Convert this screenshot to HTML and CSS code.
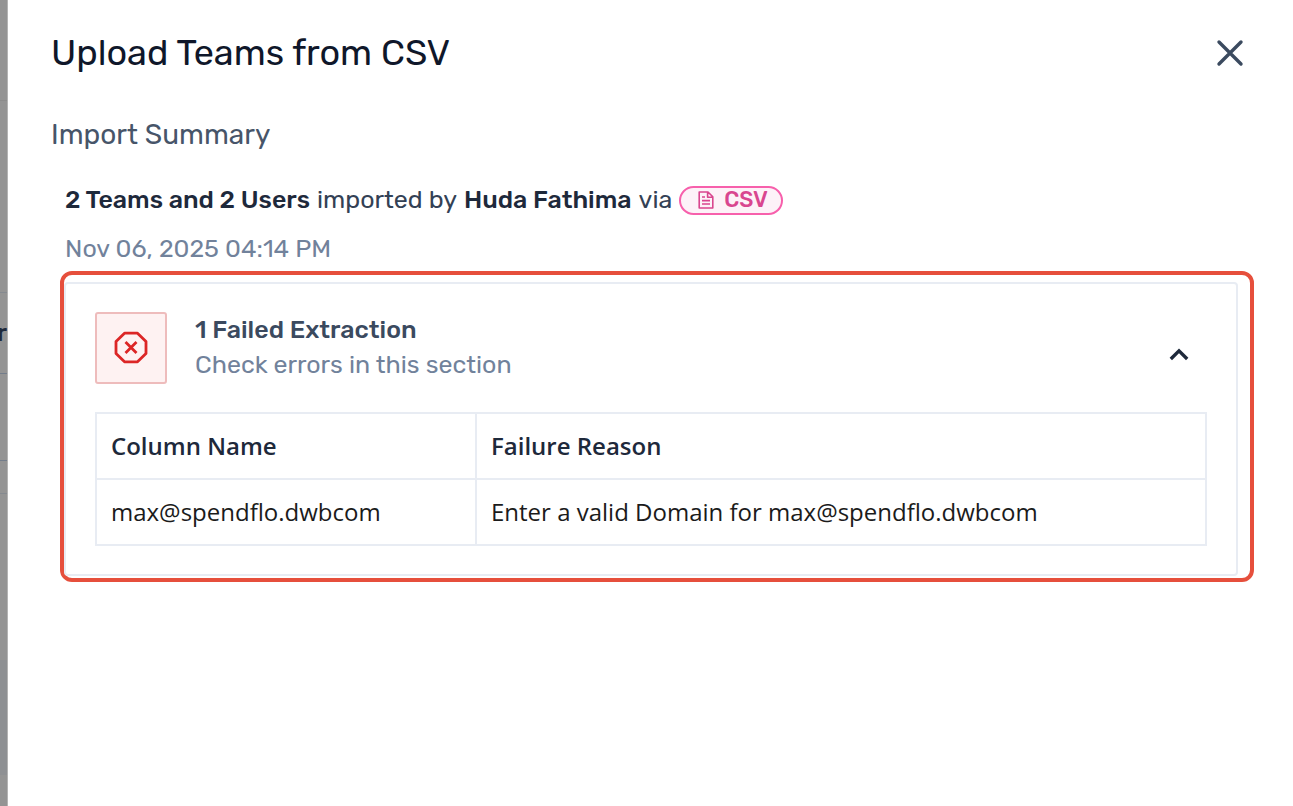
FILE: index.html
```html
<!DOCTYPE html>
<html lang="en">
<head>
    <meta charset="UTF-8">
    <meta name="viewport" content="width=device-width, initial-scale=1.0">
    <title>Upload Teams from CSV</title>
    <link rel="stylesheet" href="styles.css">
</head>
<body>
    <!-- Page behind the drawer -->
    <div class="backdrop">
        <div class="strip strip-top"></div>
        <div class="strip strip-nav"></div>
        <div class="strip strip-head">r</div>
        <div class="strip strip-row"></div>
        <div class="strip strip-gap"></div>
        <div class="strip strip-body"></div>
        <div class="strip strip-band"></div>
    </div>

    <main class="drawer">
        <header class="drawer-header">
            <h1>Upload Teams from CSV</h1>
            <button type="button" class="icon-button" aria-label="Close">
                <svg width="30" height="30" viewBox="0 0 30 30" fill="none" stroke="#3b4a5f" stroke-width="3.4" stroke-linecap="round">
                    <path d="M4 4L26 26M26 4L4 26"/>
                </svg>
            </button>
        </header>

        <h2>Import Summary</h2>

        <section class="summary">
            <p class="summary-line">
                <strong>2 Teams and 2 Users</strong>
                <span>imported by</span>
                <strong>Huda Fathima</strong>
                <span>via</span>
                <span class="badge">
                    <svg width="16" height="18" viewBox="0 0 16 18" fill="none" stroke="#d9468f" stroke-width="1.6" stroke-linejoin="round">
                        <path d="M1.2 1H10L14.8 5.8V17H1.2ZM9.6 1V6.2H14.8M4 6H7M4 9.6H12M4 13H12"/>
                    </svg>
                    CSV
                </span>
            </p>
            <p class="date">Nov 06, 2025 04:14 PM</p>
        </section>

        <div class="highlight">
            <section class="card">
                <div class="card-header">
                    <div class="error-icon">
                        <svg width="36" height="34" viewBox="0 0 36 34" fill="none" stroke="#dc2626" stroke-width="2.8" stroke-linejoin="round">
                            <path d="M11.5 2.2H24.5L33 10.5V22.5L24.5 30.8H11.5L3 22.5V10.5ZM12.5 11L23.5 22M23.5 11L12.5 22"/>
                        </svg>
                    </div>
                    <div class="card-title">
                        <h3>1 Failed Extraction</h3>
                        <p>Check errors in this section</p>
                    </div>
                    <button type="button" class="icon-button toggle" aria-label="Collapse">
                        <svg width="20" height="14" viewBox="0 0 20 14" fill="none" stroke="#1e293b" stroke-width="3.4">
                            <path d="M1.8 12L10 3.8L18.2 12"/>
                        </svg>
                    </button>
                </div>
                <table>
                    <thead>
                        <tr>
                            <th class="col-name">Column Name</th>
                            <th>Failure Reason</th>
                        </tr>
                    </thead>
                    <tbody>
                        <tr>
                            <td>max@spendflo.dwbcom</td>
                            <td>Enter a valid Domain for max@spendflo.dwbcom</td>
                        </tr>
                    </tbody>
                </table>
            </section>
        </div>
    </main>
</body>
</html>
```
FILE: styles.css
```css
* {
    box-sizing: border-box;
}
body {
    display: flex;
    min-height: 100vh;
    margin: 0;
    font-family: Rubik, Roboto, sans-serif;
    color: #1e293b;
    background-color: white;
}
h1, h2, h3, p {
    margin: 0;
    font-weight: 400;
}

/* Dimmed page */
.backdrop {
    display: flex;
    flex-direction: column;
    flex: none;
    width: 8px;
    overflow: hidden;
    background-color: #949494;
    border-right: 1px solid #b4b4b4;
}
.strip {
    flex: none;
    border-bottom: 1px solid #858a90;
}
.strip-top {
    height: 101px;
    border-color: #8c8c8c;
}
.strip-nav {
    height: 192px;
}
.strip-head {
    height: 81px;
    font-size: 24px;
    font-weight: 500;
    line-height: 80px;
    text-indent: -3px;
    border-color: #737d8b;
}
.strip-row {
    height: 87px;
    border-color: #737d8b;
}
.strip-gap {
    height: 33px;
}
.strip-body {
    height: 166px;
    border: none;
}
.strip-band {
    height: 115px;
    background-color: #8e9093;
    border: none;
}

/* Drawer */
.drawer {
    flex: 1;
    padding: 28px 39px 28px 43px;
}
.drawer-header {
    display: flex;
    justify-content: space-between;
    align-items: center;
    padding-right: 9px;
}
h1 {
    font-size: 36px;
    line-height: 50px;
    color: #0f172a;
}
h2 {
    margin-top: 37px;
    font-size: 28px;
    line-height: 40px;
    color: #475569;
}
.icon-button {
    display: flex;
    padding: 0;
    background: none;
    border: none;
    cursor: pointer;
}

.summary {
    padding: 27px 14px 4px;
    font-size: 25px;
}
.summary-line {
    display: flex;
    align-items: center;
    gap: 7px;
    line-height: 36px;
    color: #334155;
}
.summary-line strong {
    font-weight: 500;
    color: #1e293b;
}
.badge {
    display: flex;
    align-items: center;
    gap: 10px;
    height: 29px;
    padding: 0 13px 0 17px;
    font-size: 22px;
    font-weight: 500;
    color: #d9468f;
    background-color: #fdf2f8;
    border: 2px solid #f760ac;
    border-radius: 15px;
}
.date {
    margin-top: 13px;
    line-height: 36px;
    color: #71829b;
}

/* Failed rows */
.highlight {
    margin-left: 9px;
    padding: 7px 12px 2px 0;
    border: 4px solid #e64f3c;
    border-radius: 12px;
}
.card {
    padding: 28px 29px;
    border: 2px solid #e8ecf3;
    border-radius: 4px;
}
.card-header {
    display: flex;
    align-items: center;
    gap: 28px;
    padding-right: 18px;
}
.error-icon {
    display: flex;
    justify-content: center;
    align-items: center;
    width: 72px;
    height: 72px;
    background-color: #fef2f2;
    border: 2px solid #eebcbc;
    border-radius: 3px;
}
.card-title {
    flex: 1;
    padding-bottom: 2px;
    font-size: 25px;
    line-height: 35px;
    color: #71829b;
}
h3 {
    font-size: 25px;
    font-weight: 500;
    color: #3b4a5f;
}
.toggle {
    padding-top: 11px;
}
table {
    width: 100%;
    margin-top: 28px;
    border-collapse: collapse;
    font-family: "Segoe UI", "Open Sans", sans-serif;
    font-size: 24px;
    line-height: 34px;
    text-align: left;
}
th, td {
    padding: 15px 15px 15px 14px;
    border: 2px solid #e8ecf3;
}
th {
    font-weight: 600;
}
td {
    color: #1b1b1b;
}
.col-name {
    width: 380px;
}
```
